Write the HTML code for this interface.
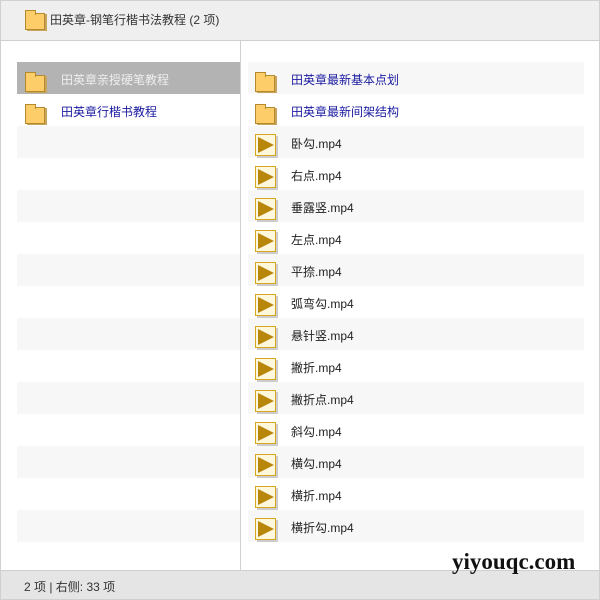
<!DOCTYPE html>
<html><head><meta charset="utf-8"><style>
*{margin:0;padding:0;box-sizing:border-box}
body{width:600px;height:600px;overflow:hidden;background:#fff;font-family:"Liberation Sans","Noto Sans CJK SC",sans-serif;font-size:12px;color:#222;position:relative}
.frame{position:absolute;left:0;top:0;width:600px;height:600px;border:1px solid #d0d0d0}
.hdr{position:absolute;left:0;top:0;width:600px;height:41px;background:#efefef;border-bottom:1px solid #cfcfcf}
.hdr span{position:absolute;left:50px;top:11px;color:#333}
.div{position:absolute;left:240px;top:41px;width:1px;height:529px;background:#d0d0d0}
.ftr{position:absolute;left:0;top:570px;width:600px;height:30px;background:#e5e5e5;border-top:1px solid #cfcfcf}
.ftr span{position:absolute;left:24px;top:7px;color:#333}
.row{position:absolute;height:32px}
.s{background:#f7f7f7}
.sel{background:#b3b3b3}
.fold{position:absolute;width:20px;height:17px;background:#fccd68;border:1px solid #b38a2e;box-shadow:2px 1px 0 #c9a45a}
.fold:before{content:"";position:absolute;left:-1px;top:-4px;width:9px;height:4px;background:#fccd68;border:1px solid #b38a2e;border-bottom:none}
.vid{position:absolute;width:21px;height:22px;background:#fff8dc;border:1px solid #d9a520;box-shadow:2px 2px 0 #ccc}
.vid:after{content:"";position:absolute;left:2px;top:2px;border-left:16px solid #b8860b;border-top:8px solid transparent;border-bottom:8px solid transparent}
.wm{position:absolute;left:452px;top:549px;font-family:"Liberation Serif",serif;font-weight:bold;font-size:23px;color:#111}
</style></head><body>
<div class="hdr"><div class="fold" style="left:25px;top:13px"></div><span>田英章-钢笔行楷书法教程 (2 项)</span></div>
<div id="L"></div><div id="R"></div>
<div class="div"></div>
<div class="ftr"><span>2 项 | 右侧: 33 项</span></div>
<div class="wm">yiyouqc.com</div>
<div class="frame"></div>
<script>
var h='';
for(var i=0;i<15;i++){var y=62+i*32;var c=i==0?'sel':(i%2==0?'s':'');
h+='<div class="row '+c+'" style="left:17px;top:'+y+'px;width:223px"></div>';}
h+='<div class="fold" style="left:25px;top:75px"></div><span style="position:absolute;left:61px;top:71px;color:#eee">田英章亲授硬笔教程</span>';
h+='<div class="fold" style="left:25px;top:107px"></div><span style="position:absolute;left:61px;top:103px;color:#1a1aa0">田英章行楷书教程</span>';
var n=['田英章最新基本点划','田英章最新间架结构','卧勾.mp4','右点.mp4','垂露竖.mp4','左点.mp4','平捺.mp4','弧弯勾.mp4','悬针竖.mp4','撇折.mp4','撇折点.mp4','斜勾.mp4','横勾.mp4','横折.mp4','横折勾.mp4'];
for(var i=0;i<15;i++){var y=62+i*32;
h+='<div class="row '+(i%2==0?'s':'')+'" style="left:248px;top:'+y+'px;width:336px"></div>';
if(i<2)h+='<div class="fold" style="left:255px;top:'+(y+13)+'px"></div><span style="position:absolute;left:291px;top:'+(y+9)+'px;color:#1a1aa0">'+n[i]+'</span>';
else h+='<div class="vid" style="left:255px;top:'+(y+8)+'px"></div><span style="position:absolute;left:291px;top:'+(y+9)+'px">'+n[i]+'</span>';}
document.getElementById('L').innerHTML=h;
</script>
</body></html>
